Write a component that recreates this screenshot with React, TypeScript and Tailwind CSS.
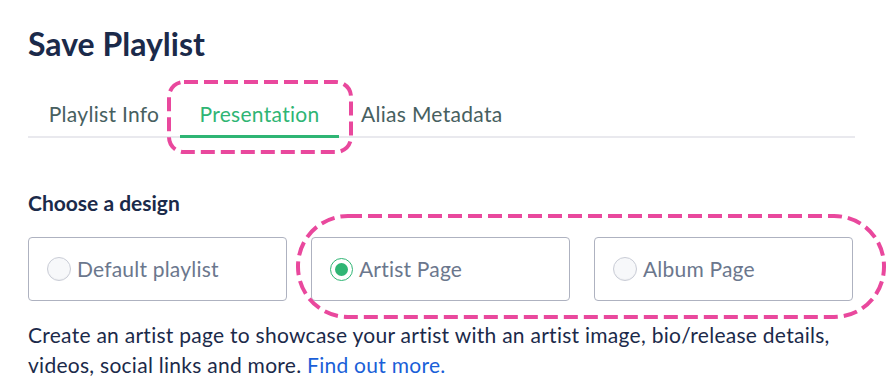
import React from "react";

function Radio({ checked }: { checked?: boolean }) {
  return checked ? (
    <span className="flex h-[23px] w-[23px] items-center justify-center rounded-full border-[1.5px] border-[#2fb574] bg-white">
      <span className="h-[13px] w-[13px] rounded-full bg-[#2fb574]" />
    </span>
  ) : (
    <span className="h-[24px] w-[24px] rounded-full border border-[#c9ccd6] bg-[#f7f8fa] shadow-[inset_0_-1px_1px_rgba(0,0,0,0.04)]" />
  );
}

function Option({ label, checked }: { label: string; checked?: boolean }) {
  return (
    <div className="flex h-[64px] w-[259px] items-center gap-[6px] rounded-[4px] border border-[#aeb2c0] bg-white pl-[18px]">
      <Radio checked={checked} />
      <span className="text-[21px] tracking-[0.2px] text-[#6b778d]">{label}</span>
    </div>
  );
}

// pink annotation outline drawn over the page
function Dashed({ w, h, r, className }: { w: number; h: number; r: number; className: string }) {
  return (
    <svg width={w} height={h} className={"pointer-events-none absolute " + className}>
      <rect x={2} y={2} width={w - 4} height={h - 4} rx={r} fill="none" stroke="#e9489d" strokeWidth={4} strokeDasharray="14 6" />
    </svg>
  );
}

export default function App() {
  return (
    <div className="relative h-[385px] w-[887px] overflow-hidden bg-white font-['Lato',sans-serif]">
      <div className="px-[28px] pt-[24px]">
        <h1 className="text-[32px] font-bold leading-[40px] text-[#1b2a4a]">Save Playlist</h1>

        <div className="mt-[36px] flex w-[827px] border-b-2 border-[#e9e9ee] text-[21px] leading-[28px] tracking-[0.3px]">
          <div className="w-[152px] pb-[8px] text-center text-[#476060]">Playlist Info</div>
          <div className="-mb-[2px] w-[159px] border-b-[3px] border-[#2fb574] pb-[7px] text-center text-[#2fb574]">Presentation</div>
          <div className="pl-[22px] pb-[8px] text-[#476060]">Alias Metadata</div>
        </div>

        <h2 className="mt-[51px] text-[21px] font-bold leading-[28px] text-[#1b2a4a]">Choose a design</h2>

        <div className="mt-[20px] flex gap-[24px]">
          <Option label="Default playlist" />
          <Option label="Artist Page" checked />
          <Option label="Album Page" />
        </div>

        <p className="mt-[19px] text-[21px] leading-[30px] tracking-[0.27px] text-[#1b2a4a]">
          Create an artist page to showcase your artist with an artist image, bio/release details,
          <br />
          videos, social links and more. <a className="text-[#1a5fd8]">Find out more.</a>
        </p>
      </div>

      <Dashed w={186} h={74} r={15} className="left-[167px] top-[80px]" />
      <Dashed w={590} h={105} r={50} className="left-[296px] top-[214px]" />
    </div>
  );
}
